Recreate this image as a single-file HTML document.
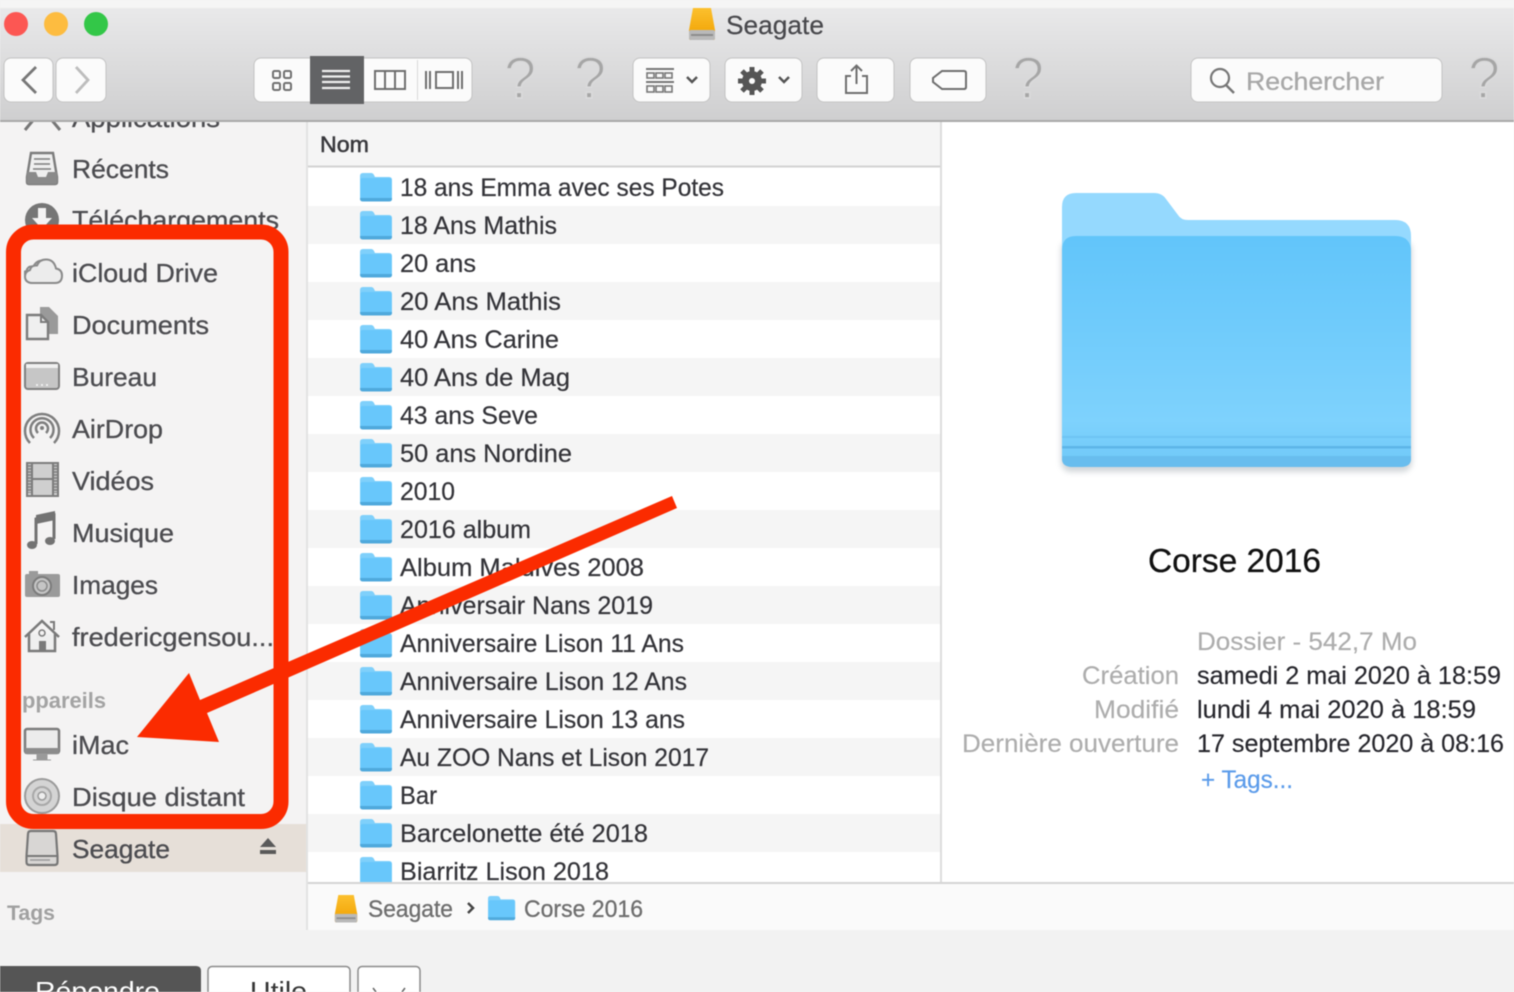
<!DOCTYPE html>
<html lang="fr"><head><meta charset="utf-8"><title>Seagate</title>
<style>
html,body{margin:0;padding:0;background:#f2f2f2;width:1514px;height:992px;overflow:hidden}
svg{display:block;filter:blur(.6px)}
text{font-family:"Liberation Sans",sans-serif}
.s{font-size:26px;fill:#4c4c50;font-weight:400;stroke:#4c4c50;stroke-width:.3}
.r{font-size:25px;fill:#333338;stroke:#333338;stroke-width:.2}
.g{font-size:25px;fill:#adadad;stroke:#adadad;stroke-width:.15}
.v{font-size:25px;fill:#26262c;stroke:#26262c;stroke-width:.15}
.ic{fill:none;stroke:#7c7c7c;stroke-width:2.4}
.q{font-size:58px;fill:#a6a6a6;stroke:#dadadb;stroke-width:1.700}
.tb{fill:none;stroke:#6e6e6e;stroke-width:2}
</style></head><body>
<svg width="1514" height="992" viewBox="0 0 1514 992" xmlns="http://www.w3.org/2000/svg">
<defs>
<linearGradient id="tg" x1="0" y1="0" x2="0" y2="1"><stop offset="0" stop-color="#e9e9ea"/><stop offset="1" stop-color="#cfcfd0"/></linearGradient>
<linearGradient id="fb" x1="0" y1="0" x2="0" y2="1"><stop offset="0" stop-color="#62c5fa"/><stop offset=".8" stop-color="#7ed2fd"/><stop offset="1" stop-color="#6fc8f8"/></linearGradient>
<linearGradient id="dr" x1="0" y1="0" x2="0" y2="1"><stop offset="0" stop-color="#fcc02e"/><stop offset="1" stop-color="#f0a000"/></linearGradient>
<clipPath id="lc"><rect x="308" y="168" width="632" height="714"/></clipPath>
<g id="f">
<path d="M0 3q0-3 3-3h8q2 0 3 2l1 2h14q3 0 3 3v18q0 3-3 3H3q-3 0-3-3z" fill="#7fd0fb"/>
<path d="M.5 7q0-2 2.500-2h26q2.500 0 2.500 2v18q0 2-2.500 2H3q-2.500 0-2.500-2z" fill="#68c7fb"/>
<path d="M0 25h32v1q0 2.500-3 2.500H3q-3 0-3-2.500z" fill="#4fa9dc"/>
</g>
<g id="dv">
<path d="M5 0h18l4 22v8q0 2-2 2H3q-2 0-2-2v-8z" fill="url(#dr)"/>
<rect x="1" y="22" width="26" height="10" rx="2" fill="#b9b9b9"/>
<rect x="3" y="26" width="22" height="2" fill="#8c8c8c"/>
</g>
</defs>

<rect width="1514" height="992" fill="#f2f2f2"/>
<rect width="1514" height="9" fill="#f5f5f5"/>

<!-- sidebar -->
<rect x="0" y="120" width="306" height="810" fill="#f4f3f3"/>
<rect x="306" y="120" width="2" height="810" fill="#e2e2e2"/>
<rect x="0" y="824" width="306" height="48" fill="#e6dfd8"/>
<text class="s" x="72" y="127" textLength="148" lengthAdjust="spacingAndGlyphs">Applications</text>
<path d="M25 130l10-12M60 130l-10-12" stroke="#777" stroke-width="3" fill="none"/>

<path d="M31 153h22l4 24v5q0 2-2 2H29q-2 0-2-2v-5z" fill="#efefef" stroke="#7c7c7c" stroke-width="2.400"/>
<path d="M27 172h9l2 5h8l2-5h9v10q0 2-2 2H29q-2 0-2-2z" fill="#8a8a8a"/>
<path d="M34 159h16M34 164h16M33 169h18" stroke="#7c7c7c" stroke-width="1.600"/>
<text class="s" x="72" y="178" textLength="97" lengthAdjust="spacingAndGlyphs">Récents</text>
<circle cx="42" cy="220" r="17" fill="#767676"/><path d="M38 208h8v10h6l-10 11-10-11h6z" fill="#f4f3f3"/>
<text class="s" x="72" y="229" textLength="207" lengthAdjust="spacingAndGlyphs">Téléchargements</text>

<path d="M32 283h20q7 0 7-6.500 0-6-6-7-1-9-10-9-7 0-9.500 6-6-1-7 4.500-1.500.5-1.500.5-.5 11 7 11.500z" fill="#ececec" stroke="#8a8a8a" stroke-width="2"/>
<path d="M32 283q-7-.5-7-6.500 0-5 5-6.500 1-5 7-4.500 2.500-6 9-6 8 0 10 9 6 1 6 7 0 7.500-7 7.500z" fill="#ececec" stroke="#8a8a8a" stroke-width="2"/>
<text class="s" x="72" y="282" textLength="146" lengthAdjust="spacingAndGlyphs">iCloud Drive</text>
<path d="M40 307h9l9 9v18H40z" fill="#9a9a9a"/><path d="M27 315h14l7 7v17H27z" fill="#efefef" stroke="#7c7c7c" stroke-width="2.400"/><path d="M41 315v7h7" fill="none" stroke="#7c7c7c" stroke-width="2"/>
<text class="s" x="72" y="334" textLength="137" lengthAdjust="spacingAndGlyphs">Documents</text>
<rect x="25" y="363" width="34" height="26" rx="3" fill="#c6c6c6" stroke="#7f7f7f" stroke-width="2"/><rect x="26" y="364" width="32" height="4" fill="#f0f0f0"/><path d="M36 385h2M41 385h2M46 385h2" stroke="#eee" stroke-width="2"/>
<text class="s" x="72" y="386" textLength="85" lengthAdjust="spacingAndGlyphs">Bureau</text>
<g fill="none" stroke="#7e7e7e" stroke-width="2.500"><path d="M30 443a17 17 0 1 1 24 0"/><path d="M34 438a11.500 11.500 0 1 1 16 0"/><path d="M38 433a6 6 0 1 1 8 0"/></g><circle cx="42" cy="428" r="2" fill="#7e7e7e"/>
<text class="s" x="72" y="438" textLength="91" lengthAdjust="spacingAndGlyphs">AirDrop</text>
<rect x="27" y="463" width="31" height="33" fill="#cfcfcf" stroke="#7c7c7c" stroke-width="2"/><path d="M32 463v33M53 463v33M32 479h21" stroke="#7c7c7c" stroke-width="2"/><path d="M29.500 465v28M55.500 465v28" stroke="#8a8a8a" stroke-width="3" stroke-dasharray="2 1"/>
<text class="s" x="72" y="490" textLength="82" lengthAdjust="spacingAndGlyphs">Vidéos</text>
<path d="M36 544v-25l18-4v24" fill="none" stroke="#737373" stroke-width="3"/><path d="M36 515l19-4v9l-19 4z" fill="#737373"/><ellipse cx="32" cy="545" rx="5" ry="4" fill="#737373"/><ellipse cx="50" cy="541" rx="5" ry="4" fill="#737373"/>
<text class="s" x="72" y="542" textLength="102" lengthAdjust="spacingAndGlyphs">Musique</text>
<rect x="25" y="574" width="35" height="23" rx="2" fill="#9a9a9a"/><rect x="29" y="571" width="9" height="4" fill="#9a9a9a"/><circle cx="42" cy="586" r="9" fill="#c5c5c5" stroke="#7c7c7c" stroke-width="2"/><circle cx="42" cy="586" r="5" fill="none" stroke="#8a8a8a" stroke-width="1.500"/>
<text class="s" x="72" y="594" textLength="86" lengthAdjust="spacingAndGlyphs">Images</text>
<path d="M25 637l17-16 17 16" fill="none" stroke="#7a7a7a" stroke-width="2.500"/><path d="M29 634v17h26v-17" fill="#efefef" stroke="#7a7a7a" stroke-width="2.500"/><rect x="39" y="641" width="7" height="10" fill="#7a7a7a"/><circle cx="42" cy="633" r="3" fill="none" stroke="#7a7a7a" stroke-width="1.500"/><path d="M50 622h4v8" fill="none" stroke="#7a7a7a" stroke-width="2"/>
<text class="s" x="72" y="646" textLength="202" lengthAdjust="spacingAndGlyphs">fredericgensou...</text>
<text x="22" y="708" font-size="22" font-weight="700" fill="#a3a3a3" textLength="84" lengthAdjust="spacingAndGlyphs">ppareils</text>
<rect x="25" y="729" width="34" height="24" rx="2" fill="#ececec" stroke="#7c7c7c" stroke-width="2.500"/><rect x="25" y="748" width="34" height="6" fill="#8c8c8c"/><path d="M37 754h10v5H37zM33 760h18" fill="#9a9a9a" stroke="#9a9a9a"/>
<text class="s" x="72" y="754" textLength="57" lengthAdjust="spacingAndGlyphs">iMac</text>
<circle cx="42" cy="796" r="17" fill="#d4d4d4" stroke="#9a9a9a" stroke-width="2"/><circle cx="42" cy="796" r="9" fill="none" stroke="#a8a8a8" stroke-width="2"/><circle cx="42" cy="796" r="4" fill="#eee" stroke="#9a9a9a" stroke-width="1.500"/>
<text class="s" x="72" y="806" textLength="173" lengthAdjust="spacingAndGlyphs">Disque distant</text>
<path d="M31 831h22q3 0 3 3l1.500 22v6q0 3-3 3H29.500q-3 0-3-3v-6L28 834q0-3 3-3z" fill="#d8d6d4" stroke="#777" stroke-width="2.200"/><path d="M27 856h30" stroke="#777" stroke-width="2"/><path d="M30 860h20" stroke="#9a9a9a" stroke-width="1.500"/>
<text class="s" x="72" y="858" textLength="98" lengthAdjust="spacingAndGlyphs">Seagate</text>
<path d="M268 838l8 9h-16z" fill="#5a5a5a"/><rect x="260" y="850" width="16" height="4" fill="#5a5a5a"/>
<text x="7" y="920" font-size="21" font-weight="700" fill="#a0a0a0" textLength="48" lengthAdjust="spacingAndGlyphs">Tags</text>

<!-- list -->
<rect x="308" y="122" width="633" height="760" fill="#fff"/>
<rect x="308" y="122" width="633" height="44" fill="#f5f5f5"/>
<rect x="308" y="165.500" width="633" height="2" fill="#d2d2d2"/>
<text x="320" y="152" font-size="22" fill="#38383c" stroke="#38383c" stroke-width=".5" textLength="49" lengthAdjust="spacingAndGlyphs">Nom</text>
<g fill="#f5f5f5"><rect x="308" y="206" width="633" height="38"/><rect x="308" y="282" width="633" height="38"/><rect x="308" y="358" width="633" height="38"/><rect x="308" y="434" width="633" height="38"/><rect x="308" y="510" width="633" height="38"/><rect x="308" y="586" width="633" height="38"/><rect x="308" y="662" width="633" height="38"/><rect x="308" y="738" width="633" height="38"/><rect x="308" y="814" width="633" height="38"/></g>
<g clip-path="url(#lc)">
<use href="#f" x="360" y="173"/><text class="r" x="400" y="196" textLength="324" lengthAdjust="spacingAndGlyphs">18 ans Emma avec ses Potes</text>
<use href="#f" x="360" y="211"/><text class="r" x="400" y="234" textLength="157" lengthAdjust="spacingAndGlyphs">18 Ans Mathis</text>
<use href="#f" x="360" y="249"/><text class="r" x="400" y="272" textLength="76" lengthAdjust="spacingAndGlyphs">20 ans</text>
<use href="#f" x="360" y="287"/><text class="r" x="400" y="310" textLength="161" lengthAdjust="spacingAndGlyphs">20 Ans Mathis</text>
<use href="#f" x="360" y="325"/><text class="r" x="400" y="348" textLength="159" lengthAdjust="spacingAndGlyphs">40 Ans Carine</text>
<use href="#f" x="360" y="363"/><text class="r" x="400" y="386" textLength="170" lengthAdjust="spacingAndGlyphs">40 Ans de Mag</text>
<use href="#f" x="360" y="401"/><text class="r" x="400" y="424" textLength="138" lengthAdjust="spacingAndGlyphs">43 ans Seve</text>
<use href="#f" x="360" y="439"/><text class="r" x="400" y="462" textLength="172" lengthAdjust="spacingAndGlyphs">50 ans Nordine</text>
<use href="#f" x="360" y="477"/><text class="r" x="400" y="500" textLength="55" lengthAdjust="spacingAndGlyphs">2010</text>
<use href="#f" x="360" y="515"/><text class="r" x="400" y="538" textLength="131" lengthAdjust="spacingAndGlyphs">2016 album</text>
<use href="#f" x="360" y="553"/><text class="r" x="400" y="576" textLength="244" lengthAdjust="spacingAndGlyphs">Album Maldives 2008</text>
<use href="#f" x="360" y="591"/><text class="r" x="400" y="614" textLength="253" lengthAdjust="spacingAndGlyphs">Anniversair Nans 2019</text>
<use href="#f" x="360" y="629"/><text class="r" x="400" y="652" textLength="284" lengthAdjust="spacingAndGlyphs">Anniversaire Lison 11 Ans</text>
<use href="#f" x="360" y="667"/><text class="r" x="400" y="690" textLength="287" lengthAdjust="spacingAndGlyphs">Anniversaire Lison 12 Ans</text>
<use href="#f" x="360" y="705"/><text class="r" x="400" y="728" textLength="285" lengthAdjust="spacingAndGlyphs">Anniversaire Lison 13 ans</text>
<use href="#f" x="360" y="743"/><text class="r" x="400" y="766" textLength="309" lengthAdjust="spacingAndGlyphs">Au ZOO Nans et Lison 2017</text>
<use href="#f" x="360" y="781"/><text class="r" x="400" y="804" textLength="37" lengthAdjust="spacingAndGlyphs">Bar</text>
<use href="#f" x="360" y="819"/><text class="r" x="400" y="842" textLength="248" lengthAdjust="spacingAndGlyphs">Barcelonette été 2018</text>
<use href="#f" x="360" y="857"/><text class="r" x="400" y="880" textLength="209" lengthAdjust="spacingAndGlyphs">Biarritz Lison 2018</text>
</g>
<rect x="940" y="122" width="2" height="760" fill="#dcdcdc"/>

<!-- preview -->
<rect x="942" y="122" width="572" height="760" fill="#fff"/>
<rect x="1061" y="240" width="351" height="232" rx="10" fill="#8e9aa2" opacity=".4" filter="blur(3px)"/>
<path d="M1062 207q0-14 14-14h78q8 0 12 6l12 16q3 5 10 5h207q16 0 16 16v224H1062z" fill="#95d9fe"/>
<path d="M1062 250q0-14 14-14h319q16 0 16 16v204q0 11-11 11H1073q-11 0-11-11z" fill="url(#fb)"/>
<rect x="1062" y="436" width="349" height="2" fill="#66bdee" opacity=".6"/><rect x="1062" y="446" width="349" height="2.500" fill="#5db5e8"/>
<path d="M1062 456h349v3q0 8-11 8H1073q-11 0-11-8z" fill="#68bdee"/>
<text x="1148" y="572" font-size="33" fill="#111" stroke="#111" stroke-width=".3" textLength="173" lengthAdjust="spacingAndGlyphs">Corse 2016</text>
<text class="g" x="1197" y="650" textLength="220" lengthAdjust="spacingAndGlyphs">Dossier - 542,7 Mo</text>
<text class="g" x="1082" y="684" textLength="97" lengthAdjust="spacingAndGlyphs">Création</text>
<text class="v" x="1197" y="684" textLength="304" lengthAdjust="spacingAndGlyphs">samedi 2 mai 2020 à 18:59</text>
<text class="g" x="1094" y="718" textLength="85" lengthAdjust="spacingAndGlyphs">Modifié</text>
<text class="v" x="1197" y="718" textLength="279" lengthAdjust="spacingAndGlyphs">lundi 4 mai 2020 à 18:59</text>
<text class="g" x="962" y="752" textLength="217" lengthAdjust="spacingAndGlyphs">Dernière ouverture</text>
<text class="v" x="1197" y="752" textLength="307" lengthAdjust="spacingAndGlyphs">17 septembre 2020 à 08:16</text>
<text x="1201" y="788" font-size="25" fill="#5b9bea" stroke="#5b9bea" stroke-width=".2" textLength="92" lengthAdjust="spacingAndGlyphs">+ Tags...</text>

<!-- path bar -->
<rect x="308" y="882" width="1206" height="2" fill="#d4d4d4"/>
<rect x="308" y="884" width="1206" height="46" fill="#fafafa"/>
<use href="#dv" transform="translate(334 895) scale(.86)"/>
<text x="368" y="917" font-size="24" fill="#6e6e6e" stroke="#6e6e6e" stroke-width=".3" textLength="85" lengthAdjust="spacingAndGlyphs">Seagate</text>
<path d="M468 903l5 5-5 5" fill="none" stroke="#444" stroke-width="2.500"/>
<use href="#f" transform="translate(488 896) scale(.85)"/>
<text x="524" y="917" font-size="24" fill="#6e6e6e" stroke="#6e6e6e" stroke-width=".3" textLength="119" lengthAdjust="spacingAndGlyphs">Corse 2016</text>

<!-- toolbar -->
<rect x="0" y="8" width="1514" height="112" fill="url(#tg)"/>
<rect x="0" y="120" width="1514" height="2" fill="#a9a9a9"/>
<circle cx="16" cy="24" r="12" fill="#fc5753"/><circle cx="56" cy="24" r="12" fill="#fdbc40"/><circle cx="96" cy="24" r="12" fill="#33c748"/>
<use href="#dv" transform="translate(688 8)"/>
<text x="726" y="34" font-size="26" fill="#48484c" stroke="#48484c" stroke-width=".2" textLength="98" lengthAdjust="spacingAndGlyphs">Seagate</text>

<g fill="#fbfbfb" stroke="#c3c3c3" stroke-width="1">
<rect x="4" y="58" width="49" height="44" rx="7"/><rect x="56" y="58" width="50" height="44" rx="7"/>
<rect x="254" y="58" width="218" height="44" rx="7"/>
<rect x="633" y="58" width="77" height="44" rx="7"/><rect x="725" y="58" width="77" height="44" rx="7"/>
<rect x="817" y="58" width="77" height="44" rx="7"/><rect x="910" y="58" width="76" height="44" rx="7"/>
<rect x="1191" y="58" width="251" height="44" rx="7"/>
</g>
<path d="M36 67L23 80l13 13" fill="none" stroke="#777" stroke-width="2.800"/>
<path d="M76 67l12 13-12 13" fill="none" stroke="#bdbdbd" stroke-width="2.800"/>
<rect x="310" y="56" width="54" height="48" fill="#626365"/>
<rect x="417" y="60" width="1" height="40" fill="#d8d8d8"/>
<g fill="none" stroke="#707070" stroke-width="2"><rect x="273" y="71" width="7" height="7" rx="1.500"/><rect x="284" y="71" width="7" height="7" rx="1.500"/><rect x="273" y="83" width="7" height="7" rx="1.500"/><rect x="284" y="83" width="7" height="7" rx="1.500"/></g>
<path d="M322 71h28M322 76.500h28M322 82h28M322 88h28" stroke="#f0f0f0" stroke-width="2.200"/>
<path class="tb" d="M375 71h30v18h-30zM385 71v18M395 71v18"/>
<path class="tb" d="M426 71v18M430 71v18M458 71v18M462 71v18M436 72h17v16h-17z"/>
<path d="M646 68h28v2h-28zM646 81h28v2h-28z" fill="#777"/>
<g fill="none" stroke="#777" stroke-width="1.600"><rect x="647" y="73" width="7" height="5"/><rect x="656" y="73" width="7" height="5"/><rect x="665" y="73" width="7" height="5"/><rect x="647" y="86" width="7" height="6"/><rect x="656" y="86" width="7" height="6"/><rect x="665" y="86" width="7" height="6"/></g>
<path d="M687 77l5 5 5-5" fill="none" stroke="#555" stroke-width="2.500"/>
<path d="M752 67v28M738 81h28M742 71l20 20M762 71l-20 20" stroke="#555" stroke-width="5"/>
<circle cx="752" cy="81" r="10" fill="#555"/>
<circle cx="752" cy="81" r="3" fill="#fbfbfb"/>
<path d="M779 77l5 5 5-5" fill="none" stroke="#555" stroke-width="2.500"/>
<path class="tb" d="M851 76h-5v17h21V76h-5M856.500 84V66M851 71l5.500-5.500 5.500 5.500"/>
<path class="tb" d="M942 71h22q2 0 2 2v14q0 2-2 2h-22l-9-7v-4z"/>
<circle cx="1220" cy="78" r="9" fill="none" stroke="#777" stroke-width="2.200"/><path d="M1226 85l8 8" stroke="#777" stroke-width="2.500"/>
<text x="1246" y="90" font-size="25" fill="#a8a8a8" stroke="#a8a8a8" stroke-width=".3" textLength="138" lengthAdjust="spacingAndGlyphs">Rechercher</text>
<text class="q" x="504" y="98" textLength="32" lengthAdjust="spacingAndGlyphs">?</text>
<text class="q" x="574" y="98" textLength="32" lengthAdjust="spacingAndGlyphs">?</text>
<text class="q" x="1012" y="98" textLength="32" lengthAdjust="spacingAndGlyphs">?</text>
<text class="q" x="1468" y="98" textLength="32" lengthAdjust="spacingAndGlyphs">?</text>

<!-- annotation -->
<rect x="13.500" y="232" width="267.500" height="589.500" rx="20" fill="none" stroke="#fb2b00" stroke-width="15"/>
<polygon points="672,496 677,508 207,713 219,742 137,737 189,673 200,700" fill="#fb2b00"/>

<!-- bottom buttons -->
<path d="M0 966h196q5 0 5 5v21H0z" fill="#555"/>
<text x="35" y="1000" font-size="26" fill="#fff" textLength="125" lengthAdjust="spacingAndGlyphs">Répondre</text>
<rect x="208" y="966.500" width="142" height="40" rx="4" fill="#fff" stroke="#8a8a8a" stroke-width="1.500"/>
<text x="250" y="1000" font-size="26" fill="#333" textLength="57" lengthAdjust="spacingAndGlyphs">Utile</text>
<rect x="358" y="966.500" width="62" height="40" rx="4" fill="#fff" stroke="#8a8a8a" stroke-width="1.500"/>
<path d="M373 988l3 4M405 988l-3 4" stroke="#666" stroke-width="1.500"/>
</svg>
</body></html>
